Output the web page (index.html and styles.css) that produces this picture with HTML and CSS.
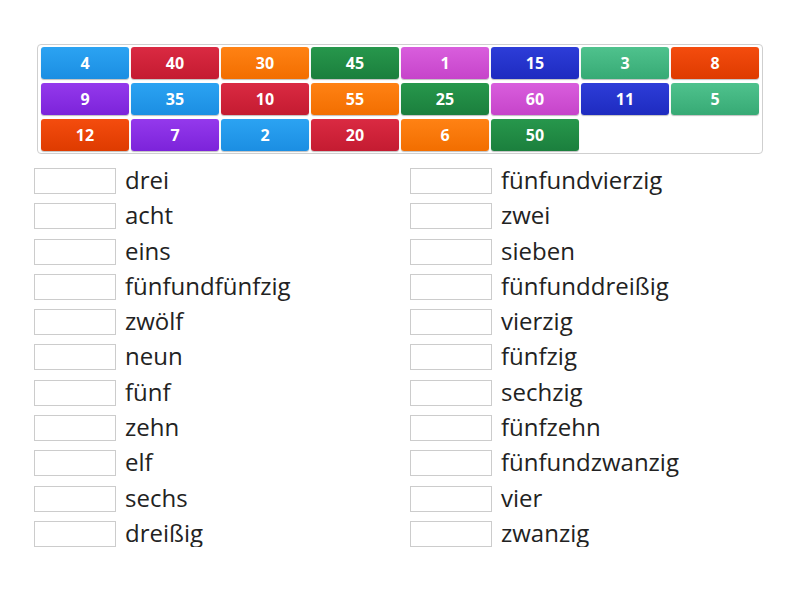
FILE: index.html
```html
<!DOCTYPE html>
<html lang="de">
<head>
<meta charset="utf-8">
<title>Zahlen</title>
<link rel="stylesheet" href="styles.css">
</head>
<body>
<div class="page">
  <div class="tray">
    <div class="tile blue">4</div>
    <div class="tile red">40</div>
    <div class="tile orange">30</div>
    <div class="tile green">45</div>
    <div class="tile pink">1</div>
    <div class="tile navy">15</div>
    <div class="tile teal">3</div>
    <div class="tile vermilion">8</div>
    <div class="tile purple">9</div>
    <div class="tile blue">35</div>
    <div class="tile red">10</div>
    <div class="tile orange">55</div>
    <div class="tile green">25</div>
    <div class="tile pink">60</div>
    <div class="tile navy">11</div>
    <div class="tile teal">5</div>
    <div class="tile vermilion">12</div>
    <div class="tile purple">7</div>
    <div class="tile blue">2</div>
    <div class="tile red">20</div>
    <div class="tile orange">6</div>
    <div class="tile green">50</div>
  </div>
  <div class="answers">
    <div class="col">
      <div class="row"><span class="slot"></span><span class="word">drei</span></div>
      <div class="row"><span class="slot"></span><span class="word">acht</span></div>
      <div class="row"><span class="slot"></span><span class="word">eins</span></div>
      <div class="row"><span class="slot"></span><span class="word">fünfundfünfzig</span></div>
      <div class="row"><span class="slot"></span><span class="word">zwölf</span></div>
      <div class="row"><span class="slot"></span><span class="word">neun</span></div>
      <div class="row"><span class="slot"></span><span class="word">fünf</span></div>
      <div class="row"><span class="slot"></span><span class="word">zehn</span></div>
      <div class="row"><span class="slot"></span><span class="word">elf</span></div>
      <div class="row"><span class="slot"></span><span class="word">sechs</span></div>
      <div class="row"><span class="slot"></span><span class="word">dreißig</span></div>
    </div>
    <div class="col">
      <div class="row"><span class="slot"></span><span class="word">fünfundvierzig</span></div>
      <div class="row"><span class="slot"></span><span class="word">zwei</span></div>
      <div class="row"><span class="slot"></span><span class="word">sieben</span></div>
      <div class="row"><span class="slot"></span><span class="word">fünfunddreißig</span></div>
      <div class="row"><span class="slot"></span><span class="word">vierzig</span></div>
      <div class="row"><span class="slot"></span><span class="word">fünfzig</span></div>
      <div class="row"><span class="slot"></span><span class="word">sechzig</span></div>
      <div class="row"><span class="slot"></span><span class="word">fünfzehn</span></div>
      <div class="row"><span class="slot"></span><span class="word">fünfundzwanzig</span></div>
      <div class="row"><span class="slot"></span><span class="word">vier</span></div>
      <div class="row"><span class="slot"></span><span class="word">zwanzig</span></div>
    </div>
  </div>
</div>
</body>
</html>
```
FILE: styles.css
```css
html, body {
  margin: 0;
  padding: 0;
  background: #ffffff;
}
body {
  font-family: "Open Sans", "Liberation Sans", sans-serif;
  color: #222222;
}
.page {
  padding: 44px 0 0 37px;
  width: 726px;
}
.tray {
  box-sizing: border-box;
  width: 726px;
  border: 1px solid #cfcfcf;
  border-radius: 4px;
  padding: 2px 3px 2px 3px;
  display: grid;
  grid-template-columns: repeat(8, 88px);
  grid-auto-rows: 32px;
  column-gap: 2px;
  row-gap: 4px;
}
.tile {
  border-radius: 3px;
  color: #ffffff;
  font-weight: 700;
  font-size: 16px;
  display: flex;
  align-items: center;
  justify-content: center;
  box-shadow: 0 1px 1px rgba(0, 0, 0, 0.25);
}
.blue { background: linear-gradient(#2ba3f2, #1b8ee2); }
.red { background: linear-gradient(#da2a42, #c41b31); }
.orange { background: linear-gradient(#ff8214, #f26e00); }
.green { background: linear-gradient(#27974c, #1b7f3d); }
.pink { background: linear-gradient(#d95edd, #c644ca); }
.navy { background: linear-gradient(#2d3dd8, #1e2bc0); }
.teal { background: linear-gradient(#4fc28d, #37aa75); }
.vermilion { background: linear-gradient(#f44c0e, #de3b00); }
.purple { background: linear-gradient(#9439ec, #7c23da); }

.answers {
  display: flex;
  margin-top: 14px;
  margin-left: -3px;
}
.col {
  flex: none;
  width: 376px;
  display: flex;
  flex-direction: column;
  row-gap: 9.3px;
}
.row {
  display: flex;
  align-items: center;
  height: 26px;
}
.slot {
  box-sizing: border-box;
  width: 82px;
  height: 26px;
  border: 1px solid #cccccc;
  flex: none;
}
.word {
  margin-left: 9px;
  font-size: 24px;
  line-height: 26px;
  white-space: nowrap;
  position: relative;
  top: -1px;
}
```
